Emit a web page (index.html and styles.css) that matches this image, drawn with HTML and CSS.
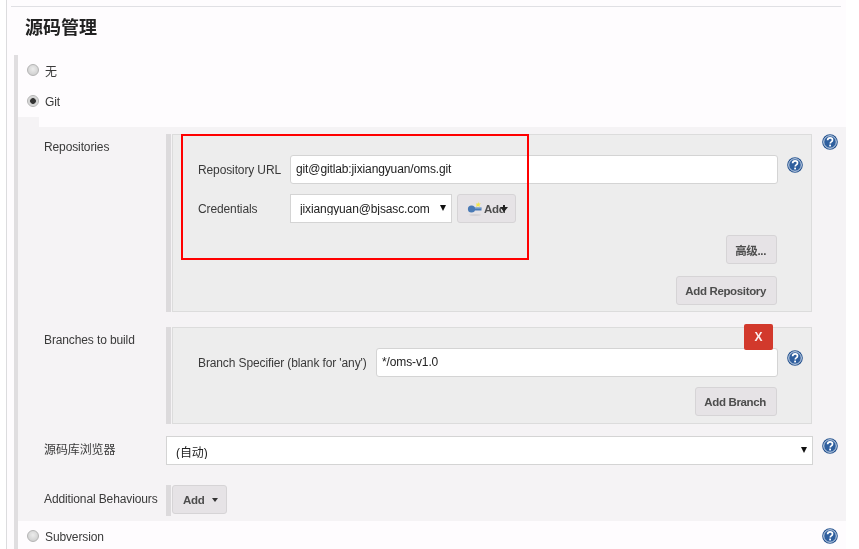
FILE: index.html
```html
<!DOCTYPE html>
<html lang="zh">
<head>
<meta charset="utf-8">
<title>源码管理</title>
<link rel="stylesheet" href="styles.css">
</head>
<body>
<svg class="defs" width="0" height="0" aria-hidden="true">
  <symbol id="help" viewBox="0 0 16 16">
    <circle cx="8" cy="8" r="7.8" fill="#24528f"/>
    <circle cx="8" cy="8" r="6.300" fill="#2f5f9e" stroke="#e4ebf4" stroke-width="0.9"/>
    <path d="M5.600 6.200C5.700 4.600 6.800 3.900 8.100 3.900c1.400 0 2.400.8 2.400 2 0 1-.6 1.500-1.300 2-.6.4-.9.8-.9 1.700" fill="none" stroke="#fff" stroke-width="1.700"/>
    <rect x="7.200" y="10.600" width="1.800" height="1.800" fill="#fff"/>
  </symbol>
</svg>
<div class="page">
  <div class="frame">
    <h1 class="title">源码管理</h1>
    <section class="section">
      <div class="radio-row"><span class="radio"></span><span>无</span></div>
      <div class="radio-row"><span class="radio checked"></span><span>Git</span></div>
      <div class="notch"></div>
      <div class="config">
        <div class="label">Repositories</div>
        <div class="chunk">
          <div class="bar"></div>
          <div class="box box-repo">
            <div class="field">
              <div class="field-label">Repository URL</div>
              <div class="input">git@gitlab:jixiangyuan/oms.git</div>
              <svg class="help help-inner"><use href="#help"/></svg>
            </div>
            <div class="field field-cred">
              <div class="field-label">Credentials</div>
              <div class="select select-cred"><span class="select-text">jixiangyuan@bjsasc.com</span><span class="arrow"></span></div>
              <div class="btn btn-key">
                <svg class="key" viewBox="0 0 16 15" width="16" height="15">
                  <ellipse cx="8" cy="14" rx="6" ry="0.9" fill="#d6d3d6"/>
                  <circle cx="4.500" cy="8" r="3.600" fill="#4a7ab5"/>
                  <rect x="7" y="6.500" width="7.500" height="3" fill="#4a7ab5"/>
                  <rect x="8" y="6.500" width="6.500" height="1" fill="#8fb0d6"/>
                  <path d="M11 0.500l.9 1.900 2 .2-1.500 1.400.5 2-1.900-1-1.900 1 .5-2L9.100 2.600l2-.2z" fill="#f4e64a"/>
                </svg>
                <span>Add</span>
                <svg class="key-caret" viewBox="0 0 8 8" width="8" height="8"><path d="M0 2h8L4 7zM3 0h2v3H3z" fill="#222"/></svg>
              </div>
            </div>
            <div class="actions actions-adv"><div class="btn">高级...</div></div>
            <div class="actions actions-add"><div class="btn">Add Repository</div></div>
          </div>
        </div>
        <svg class="help"><use href="#help"/></svg>

        <div class="label label-gap">Branches to build</div>
        <div class="chunk chunk-gap">
          <div class="bar"></div>
          <div class="box box-branch">
            <div class="btn-x">X</div>
            <div class="field field-branch">
              <div class="field-label">Branch Specifier (blank for 'any')</div>
              <div class="input">*/oms-v1.0</div>
              <svg class="help help-inner"><use href="#help"/></svg>
            </div>
            <div class="actions actions-branch"><div class="btn">Add Branch</div></div>
          </div>
        </div>
        <div class="chunk-gap"></div>

        <div class="label label-browser">源码库浏览器</div>
        <div class="select select-wide"><span class="select-text">(自动)</span><span class="arrow"></span></div>
        <svg class="help help-browser"><use href="#help"/></svg>

        <div class="label label-behave">Additional Behaviours</div>
        <div class="chunk chunk-behave">
          <div class="bar"></div>
          <div class="btn btn-add"><span>Add</span><span class="caret"></span></div>
        </div>
      </div>
      <div class="radio-row row-svn">
        <span class="radio"></span><span>Subversion</span>
        <svg class="help help-svn"><use href="#help"/></svg>
      </div>
    </section>
  </div>
  <div class="annotation"></div>
</div>
</body>
</html>
```

FILE: styles.css
```css
* { box-sizing: border-box; }
html, body { margin: 0; padding: 0; background: #fff; }
.defs { position: absolute; }
.page {
  position: relative;
  width: 859px;
  height: 549px;
  overflow: hidden;
  font-family: "Liberation Sans", "Noto Sans CJK SC", sans-serif;
  font-size: 12px;
  letter-spacing: -0.12px;
  color: #3a3a3a;
  filter: blur(0.35px);
}
.frame {
  width: 840px;
  height: 549px;
  margin-left: 6px;
  padding-top: 6px;
  border-left: 1px solid #dcdcde;
  background: #fefcfe;
}
.title {
  width: 830px;
  height: 49px;
  margin: 0 0 0 4px;
  padding: 5px 0 0 14px;
  border-top: 1px solid #e0e0e4;
  font-family: "Noto Sans CJK SC", "Liberation Sans", sans-serif;
  font-size: 18px;
  line-height: 28px;
  font-weight: 700;
  letter-spacing: 0;
  color: #222;
}
.section {
  margin-left: 7px;
  height: 494px;
  border-left: 4px solid #e0dee0;
}
.radio-row {
  display: flex;
  align-items: center;
  gap: 6px;
  height: 31px;
  padding-left: 9px;
}
.radio {
  width: 12px;
  height: 12px;
  margin-top: -2px;
  border-radius: 50%;
  border: 1px solid #b4b4b4;
  background: radial-gradient(circle at 50% 40%, #ececec, #c8c8c8);
}
.radio.checked {
  background: radial-gradient(circle, #333 0 2.500px, #cfcfcf 3.200px, #efefef 100%);
}
.notch { width: 21px; height: 10px; background: #f5f3f5; }
.config {
  display: grid;
  grid-template-columns: 122px 647px 1fr;
  align-content: start;
  height: 394px;
  padding: 7px 0 0 26px;
  background: #f5f3f5;
}
.label { padding-top: 6px; line-height: 14px; }
.label-gap { margin-top: 15px; }
.label-browser { margin-top: 12px; padding-top: 7px; }
.label-behave { margin-top: 20px; padding-top: 7px; white-space: nowrap; }
.chunk { display: flex; align-items: stretch; gap: 1px; width: 646px; }
.chunk-gap { margin-top: 15px; }
.chunk-behave { margin-top: 20px; height: 31px; align-items: flex-start; }
.bar { flex: none; width: 5px; align-self: stretch; background: #dcdadc; }
.box {
  position: relative;
  flex: 1;
  border: 1px solid #dcdcdc;
  background: #ededed;
}
.box-repo { height: 178px; padding: 20px 0 0 25px; }
.box-branch { height: 97px; padding: 20px 0 0 25px; }
.field {
  display: grid;
  grid-template-columns: 92px 488px 1fr;
  align-items: center;
  height: 29px;
}
.field-label { line-height: 14px; white-space: nowrap; }
.field-cred {
  grid-template-columns: 92px 162px auto;
  margin-top: 10px;
}
.field-branch { grid-template-columns: 178px 402px 1fr; }
.input {
  height: 29px;
  padding: 0 5px;
  border: 1px solid #d4d4d4;
  border-radius: 3px;
  background: #fff;
  line-height: 27px;
  color: #222;
}
.select {
  position: relative;
  height: 29px;
  border: 1px solid #d4d4d4;
  background: #fff;
  color: #222;
}
.select-text {
  display: block;
  height: 20px;
  margin-left: 9px;
  overflow: hidden;
  line-height: 29px;
}
.select-wide { margin-top: 12px; }
.select-wide .select-text { height: 22px; line-height: 33px; }
.arrow {
  position: absolute;
  top: 10px;
  right: 5px;
  width: 0;
  height: 0;
  border-left: 3px solid transparent;
  border-right: 3px solid transparent;
  border-top: 6px solid #111;
}
.btn {
  display: inline-flex;
  align-items: center;
  height: 29px;
  padding: 0 10px 0 8px;
  border: 1px solid #d6d4d6;
  border-radius: 3px;
  background: #e6e3e6;
  font-size: 11.500px;
  letter-spacing: -0.35px;
  font-weight: 700;
  color: #4d4d4d;
  white-space: nowrap;
}
.btn-key {
  width: 59px;
  margin-left: 5px;
  padding: 0 0 0 9px;
  gap: 1px;
}
.key { flex: none; }
.key-caret { margin-left: -6px; }
.actions { display: flex; justify-content: flex-end; padding-right: 34px; }
.actions-adv { margin-top: 12px; }
.actions-add { margin-top: 12px; }
.actions-branch { margin-top: 10px; }
.btn-x {
  position: absolute;
  top: -4px;
  right: 38px;
  width: 29px;
  height: 26px;
  border-radius: 2px;
  background: #d2392c;
  color: #fbeeee;
  font-weight: 700;
  text-align: center;
  line-height: 26px;
  z-index: 1;
}
.btn-add { width: 55px; padding: 0 0 0 10px; gap: 8px; }
.caret {
  width: 0;
  height: 0;
  border-left: 3.500px solid transparent;
  border-right: 3.500px solid transparent;
  border-top: 4px solid #333;
}
.help { display: block; width: 16px; height: 16px; margin-left: 9px; }
.help-inner { margin-top: -10px; }
.help-browser { margin-top: 14px; }
.row-svn { position: relative; }
.help-svn { position: absolute; left: 804px; top: 7px; margin: 0; }
.annotation {
  position: absolute;
  left: 181px;
  top: 134px;
  width: 348px;
  height: 126px;
  border: 2px solid #f00;
}
```
